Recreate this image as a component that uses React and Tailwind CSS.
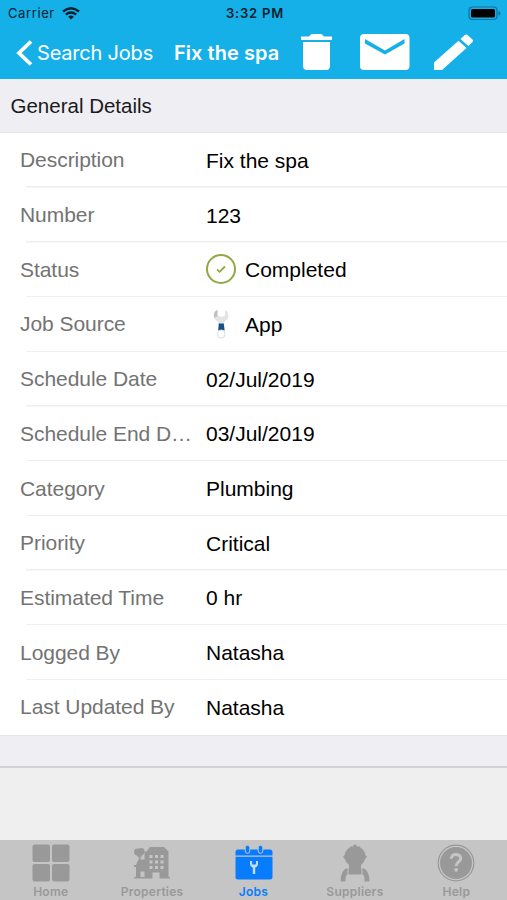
import React from 'react';

const details = [
  { label: 'Description', value: 'Fix the spa' },
  { label: 'Number', value: '123' },
  { label: 'Status', value: 'Completed', icon: CompletedIcon },
  { label: 'Job Source', value: 'App', icon: WrenchIcon },
  { label: 'Schedule Date', value: '02/Jul/2019' },
  { label: 'Schedule End D…', value: '03/Jul/2019' },
  { label: 'Category', value: 'Plumbing' },
  { label: 'Priority', value: 'Critical' },
  { label: 'Estimated Time', value: '0 hr' },
  { label: 'Logged By', value: 'Natasha' },
  { label: 'Last Updated By', value: 'Natasha' },
];

const tabs = [
  { name: 'Home', icon: HomeIcon },
  { name: 'Properties', icon: PropertiesIcon },
  { name: 'Jobs', icon: JobsIcon, active: true },
  { name: 'Suppliers', icon: SuppliersIcon },
  { name: 'Help', icon: HelpIcon },
];

function CompletedIcon() {
  return (
    <svg width="30" height="30" viewBox="0 0 30 30" fill="none" stroke="#8fa844">
      <circle cx="15" cy="15" r="14" strokeWidth="2" />
      <path d="M11 15.3l2.6 2.5 5.4-5.3" strokeWidth="1.8" />
    </svg>
  );
}

function WrenchIcon() {
  return (
    <svg width="30" height="30" viewBox="0 0 30 30">
      <path d="M11.5 1C9 1.8 7.8 4 7.8 6.5c0 3 1.5 5 4.4 6.2V16h6v-3.3c2.8-1.2 4.2-3.5 4.2-6.2 0-2.5-1.2-4.7-3.4-5.5v5.2l-1.600 1.300h-3.800l-2.100-1.600z" fill="#e2e4e6" />
      <path d="M11.5 1C9 1.8 7.8 4 7.8 6.5l.4 2.2 3.3-1.4z" fill="#bfc1c3" />
      <path d="M12.8 14.5h5l.8 7h-6.4z" fill="#155184" />
      <rect x="11.8" y="21" width="7" height="8" rx="3.2" fill="#fff" stroke="#dcdcdc" />
    </svg>
  );
}

function HomeIcon() {
  return (
    <svg width="38" height="38" viewBox="0 0 38 38" fill="currentColor">
      <rect x="0.5" y="0.5" width="17.5" height="17.5" rx="2" />
      <rect x="20" y="0.5" width="17.5" height="17.5" rx="2" />
      <rect x="0.5" y="20" width="17.5" height="17.5" rx="2" />
      <rect x="20" y="20" width="17.5" height="17.5" rx="2" />
    </svg>
  );
}

function PropertiesIcon() {
  return (
    <svg width="38" height="38" viewBox="0 0 38 38" fill="currentColor">
      <circle cx="4.5" cy="8" r="3.4" />
      <circle cx="8" cy="7.5" r="3.6" />
      <circle cx="6.5" cy="10" r="3" />
      <path d="M5.8 9h1.8v8H5.8z" />
      <path fillRule="evenodd" d="M1 33h2V23H1v-2h2l2.5-5.5h6V7.5h2L17 3h14l4.5 4.5V33H37v1.5H26.5V28.5h-7v6H1zM7.5 27.5v5.5h4v-5.5zM16.5 11v3h3v-3zM22 11v3h3v-3zM27.5 11v3h3v-3zM16.5 16.5v3h3v-3zM22 16.5v3h3v-3zM27.5 16.5v3h3v-3zM16.5 22v3h3v-3zM22 22v3h3v-3zM27.5 22v3h3v-3z" />
    </svg>
  );
}

function JobsIcon() {
  return (
    <svg width="38" height="38" viewBox="0 0 38 38" fill="currentColor">
      <path d="M3 5.5h32q2.5 0 2.5 2.5V11.5H.5V8Q.5 5.5 3 5.5zM.5 12.7h37V33q0 2.5-2.5 2.5H3Q.5 35.5.5 33z" />
      <g stroke="#c5c5c5" strokeWidth="1">
        <rect x="10.2" y="1.3" width="4.6" height="8" rx="2.3" />
        <rect x="23.2" y="1.3" width="4.6" height="8" rx="2.3" />
      </g>
      <path d="M16 17v2.500q0 3 3 3.200 3-.2 3-3.200v-2.500" fill="none" stroke="#c5dcf5" strokeWidth="2" />
      <path d="M16.500 20.500h5l-1.300 3v6.500h-2.400v-6.500z" fill="#c5dcf5" />
    </svg>
  );
}

function SuppliersIcon() {
  return (
    <svg width="38" height="38" viewBox="0 0 38 38" fill="currentColor">
      <path d="M17 2Q17.2.5 19 .5T21 2v.8l2.5-.6.8 1.2q4.500 2.600 5 7.600l1.700 1.700-1.700 2Q28 19 25 21v3.5l.5.5v5.500h-13V25l.5-.5V21q-3-2-4.300-6.300L7 12.700 8.700 11q.5-5 5-7.600l.8-1.200 2.500.6z" />
      <path d="M11.5 24v6.200q-2 1.300-2 4.300v3H4.500Q4.500 26 11.500 24zM26.500 24v6.200q2 1.300 2 4.300v3h5q0-11.500-7-13.500z" />
    </svg>
  );
}

function HelpIcon() {
  return (
    <svg width="38" height="38" viewBox="0 0 38 38">
      <circle cx="19" cy="19" r="17.8" fill="none" stroke="currentColor" strokeWidth="1.2" />
      <circle cx="19" cy="19" r="16" fill="currentColor" />
      <path d="M14.3 14.7Q14.5 10.5 19 10.5t4.7 4.100c0 3.300-4.600 3.300-4.600 7.300" fill="none" stroke="#c5c5c5" strokeWidth="3" />
      <circle cx="19.1" cy="25.8" r="1.9" fill="#c5c5c5" />
    </svg>
  );
}

function StatusBar() {
  return (
    <div className="grid h-[26px] grid-cols-3 items-center pr-[6px] pl-[8px] font-['Inter',sans-serif] text-[13px] text-[#08202c]">
      <div className="flex items-center gap-[7px] pt-[2px]">
        <span className="w-[47px] tracking-[0.6px]">Carrier</span>
        <svg className="-mt-[2px]" width="18" height="13" viewBox="0 0 18 13" fill="none" stroke="currentColor" strokeWidth="2.3">
          <path d="M1 4.5Q9-2 17 4.5M3.8 7.6q5.2-4.3 10.4 0" />
          <path d="M9 12.5L6.1 9.7q2.9-2.3 5.8 0z" fill="currentColor" stroke="none" />
        </svg>
      </div>
      <span className="pt-[2px] pl-[1px] text-center font-semibold tracking-[0.8px] whitespace-nowrap">3:32 PM</span>
      <svg className="justify-self-end" width="33" height="15" viewBox="0 0 33 15">
        <rect x="1" y="1" width="28" height="12.5" rx="3.5" fill="none" stroke="#0c749b" strokeWidth="1.2" />
        <rect x="3" y="3" width="24" height="8.5" rx="1.5" fill="#000" />
        <path d="M30.5 5q2 .5 2 2.3t-2 2.3z" fill="#0c749b" />
      </svg>
    </div>
  );
}

function NavBar() {
  return (
    <div className="flex h-[52px] items-center pl-4 font-['Inter',sans-serif] text-white">
      <button className="flex w-[158px] items-center gap-[4px] pt-px">
        <svg width="17" height="26" viewBox="0 0 17 26" fill="none" stroke="currentColor" strokeWidth="3.8">
          <path d="M15 1.5L3 13l12 11.5" />
        </svg>
        <span className="text-[20px] tracking-[-0.2px] whitespace-nowrap">Search Jobs</span>
      </button>
      <h1 className="w-[127px] pt-px text-[20px] font-semibold tracking-[0.05px] whitespace-nowrap">Fix the spa</h1>
      <svg className="mr-[28px]" width="31" height="36" viewBox="0 0 31 36" fill="currentColor">
        <path d="M0 2.5h8l2.5-2.5h10L23 2.5h8V6H0zM2 8h27v24q0 4-4 4H6q-4 0-4-4z" />
      </svg>
      <svg className="mr-[24px]" width="50" height="36" viewBox="0 0 50 36">
        <rect width="49.5" height="36" rx="4" fill="currentColor" />
        <path d="M5 5l20 11.5L44.5 5v4.5L25 20.5 5 9.5z" fill="#16b0e9" />
      </svg>
      <svg width="40" height="36" viewBox="0 0 40 36" fill="currentColor">
        <path d="M0 28.5L24.5 6.7l8 7.2L8 36H0zM26.5 4.9l4.3-3.900q1.300-1.200 2.700 0l5 4.500q1.300 1.300 0 2.500l-4.200 3.900z" />
      </svg>
    </div>
  );
}

function DetailRow({ label, value, icon: Icon, last }) {
  return (
    <div className={`flex h-[54.7px] pl-[20px] text-[21px] ${last ? '' : 'bg-[linear-gradient(#eeeeee,#eeeeee)] bg-[length:calc(100%-26px)_1.5px] bg-[position:right_bottom] bg-no-repeat'}`}>
      <span className="flex w-[171px] items-center pb-px tracking-[-0.05px] whitespace-nowrap text-[#737373]">{label}</span>
      <div className="flex items-center pl-[15px] text-black">
        {Icon && <span className="mr-[9px] -mt-[2px]"><Icon /></span>}
        <span>{value}</span>
      </div>
    </div>
  );
}

export default function App() {
  return (
    <div className="flex h-[900px] w-[507px] flex-col overflow-hidden bg-[#efefef] font-['Liberation_Sans',sans-serif]">
      <header className="h-[79px] shrink-0 bg-[#16b0e9]">
        <StatusBar />
        <NavBar />
      </header>

      <h2 className="flex h-[54.3px] shrink-0 items-center border-b border-[#e5e5e8] bg-[#efeef3] pt-[2px] pl-[10.5px] text-[20.5px] text-[#1a1a1a]">
        General Details
      </h2>
      <div className="shrink-0 bg-white">
        {details.map((item, i) => (
          <DetailRow key={item.label} {...item} last={i === details.length - 1} />
        ))}
      </div>
      <div className="h-[33.5px] shrink-0 border-t border-b-2 border-t-[#e6e6e8] border-b-[#d2d2d5] bg-[#efeef3]" />
      <div className="flex-1" />

      <nav className="flex h-[60px] shrink-0 bg-[#c5c5c5] font-['Inter',sans-serif]">
        {tabs.map(({ name, icon: Icon, active }) => (
          <button
            key={name}
            className={`flex flex-1 flex-col items-center pt-[4px] ${active ? 'text-[#087cff]' : 'text-[#999999]'}`}
          >
            <Icon />
            <span className="mt-[2px] text-[12px] leading-[16px] font-semibold tracking-[0.25px]">{name}</span>
          </button>
        ))}
      </nav>
    </div>
  );
}
